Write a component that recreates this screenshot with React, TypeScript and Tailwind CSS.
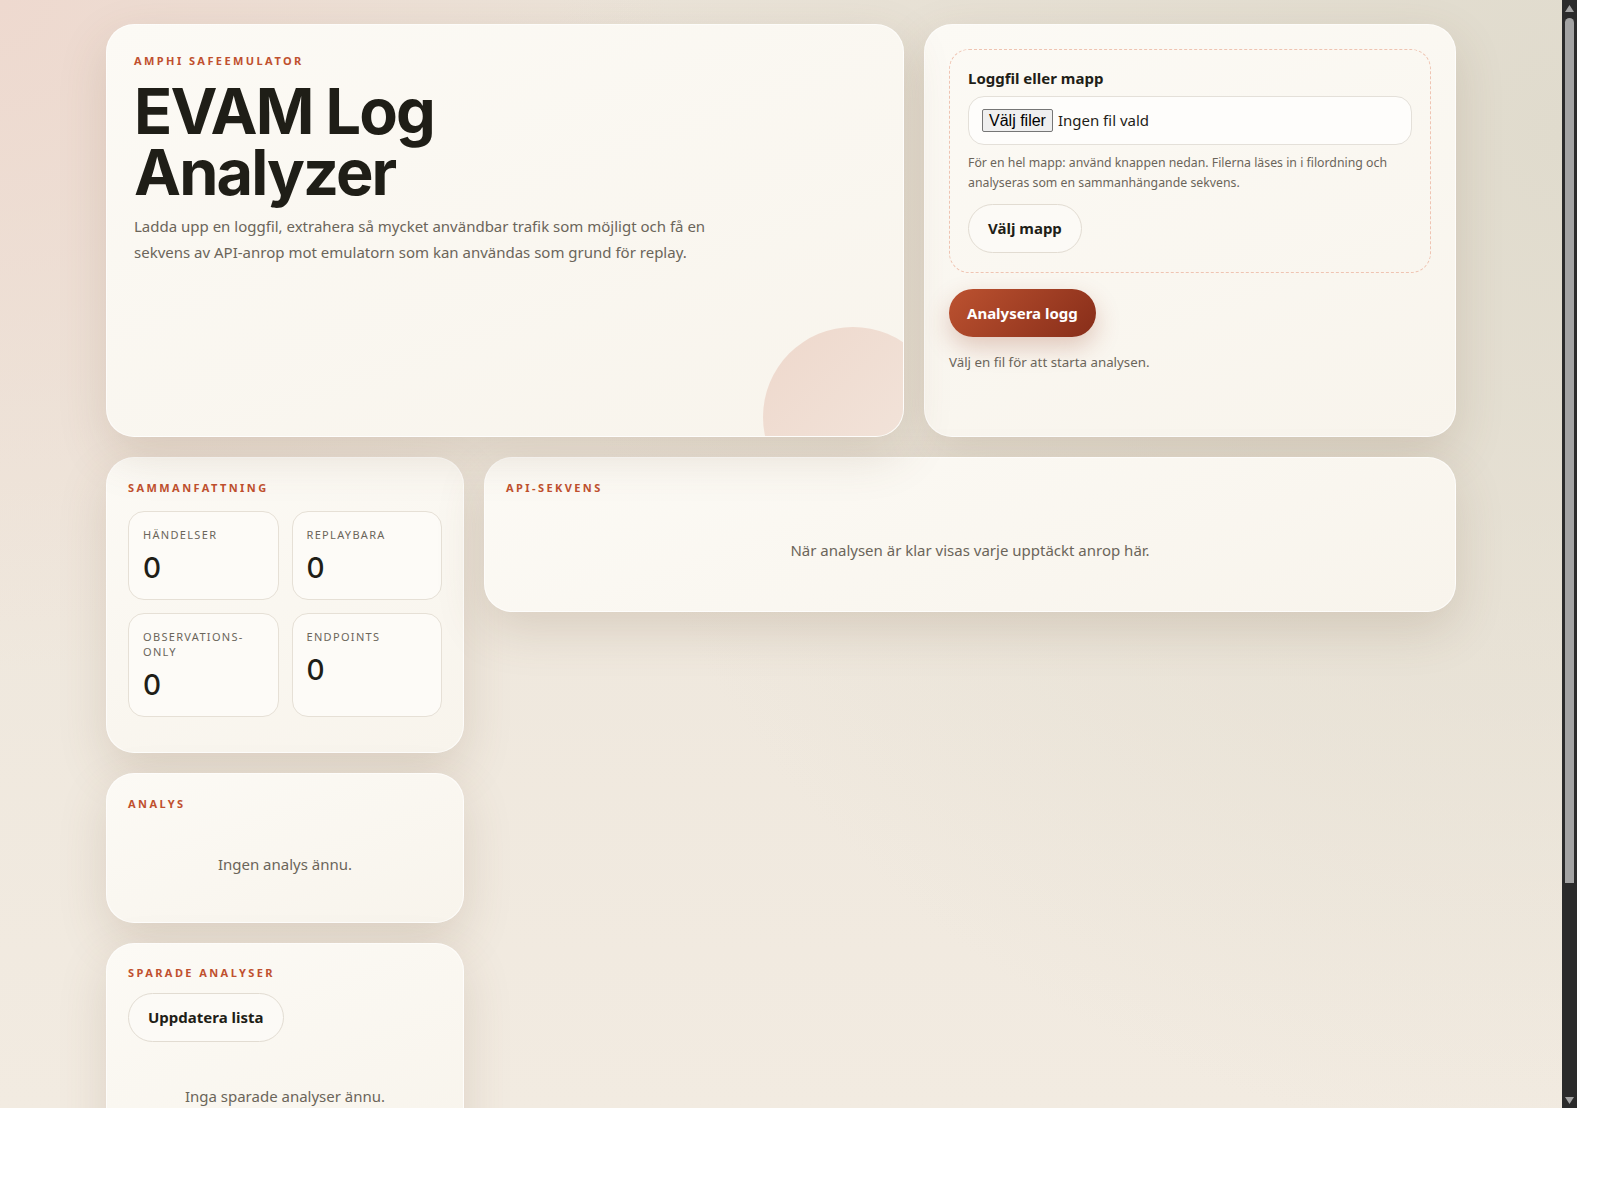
const label = "text-[11px] font-bold uppercase leading-4 tracking-[0.22em] text-[#c0502e]";
const card =
  "rounded-[28px] border border-white/70 bg-[linear-gradient(160deg,#fcfaf5,#f8f4ec)] shadow-[0_18px_48px_rgba(110,85,55,0.17)]";
const pill =
  "rounded-full border border-[#e2dcd2] bg-[#fcfaf6] text-[15px] font-bold text-[#1f1e17]";

function Stat({ name, value }: { name: string; value: number }) {
  return (
    <div className="rounded-2xl border border-[#e6e0d6] bg-[#fdfbf7] px-[14px] pb-[14px] pt-[15px]">
      <p className="text-[11px] uppercase leading-[15px] tracking-[0.12em] text-[#6b655a]">{name}</p>
      <p className="mt-[9px] font-['Inter',sans-serif] text-[28px] font-medium leading-[34px] text-[#1f1e17]">
        {value}
      </p>
    </div>
  );
}

function Empty({ children, className }: { children: React.ReactNode; className: string }) {
  return <p className={`${className} text-center text-[15px] leading-6 text-[#6b655a]`}>{children}</p>;
}

function Scrollbar() {
  return (
    <div className="flex h-full w-[15px] shrink-0 flex-col items-center bg-[#2b2b2b]">
      <svg width="9" height="7" viewBox="0 0 9 7" className="mt-[5px]">
        <path d="M4.5 0L9 7H0z" fill="#a3a3a3" />
      </svg>
      <div className="mt-[6px] h-[865px] w-[9px] rounded-t-full rounded-b-[3px] bg-[#a3a3a3]" />
      <div className="flex-1" />
      <svg width="9" height="7" viewBox="0 0 9 7" className="mb-[4px]">
        <path d="M0 0H9L4.5 7z" fill="#a3a3a3" />
      </svg>
    </div>
  );
}

export default function App() {
  return (
    <div className="flex h-[1108px] w-[1577px] overflow-hidden font-['Noto_Sans',sans-serif]">
      <div className="h-full w-[1562px] overflow-hidden bg-[radial-gradient(circle_at_0%_0%,#eed9cf,transparent_35%),radial-gradient(circle_at_100%_12%,#e0dbcd,transparent_55%),linear-gradient(180deg,#ebe4d9,#f2ebe1)]">
        <main className="mx-auto w-[1350px] pb-10 pt-6">
          {/* top row */}
          <div className="grid grid-cols-[1.5fr_1fr] gap-5">
            <section className={`${card} relative h-[413px] overflow-hidden pl-[27px] pr-7 pt-7`}>
              <p className={label}>Amphi SafeEmulator</p>
              <h1 className="mt-3 font-['Inter',sans-serif] text-[63px] font-bold leading-[61px] tracking-[-0.03em] text-[#1f1e17]">
                EVAM Log
                <br />
                Analyzer
              </h1>
              <p className="mt-[10px] max-w-[600px] text-[15px] leading-[26px] text-[#6b655a]">
                Ladda upp en loggfil, extrahera så mycket användbar trafik som möjligt och få en sekvens av
                API-anrop mot emulatorn som kan användas som grund för replay.
              </p>
              <div className="absolute bottom-[-71px] right-[-40px] h-[180px] w-[180px] rounded-full bg-[linear-gradient(135deg,#eed8cc,#f3e7de)]" />
            </section>

            <section className={`${card} p-6`}>
              <div className="rounded-[20px] border border-dashed border-[#efc4b2] px-[18px] pb-[19px] pt-[18px]">
                <p className="text-[15px] font-bold leading-5 text-[#1f1e17]">Loggfil eller mapp</p>
                <div className="mt-[8px] flex h-[49px] items-center gap-[5px] rounded-2xl border border-[#e4e0d9] bg-[#fefdfb] px-[13px]">
                  <span className="rounded-[2px] border border-[#767676] bg-[#efefef] px-[6px] py-[1px] font-['Liberation_Sans',sans-serif] text-base leading-[19px] text-black">
                    Välj filer
                  </span>
                  <span className="text-[15px] text-[#1f1e17]">Ingen fil vald</span>
                </div>
                <p className="mt-2 text-[12.3px] leading-5 text-[#6b655a]">
                  För en hel mapp: använd knappen nedan. Filerna läses in i filordning och analyseras som en
                  sammanhängande sekvens.
                </p>
                <button className={`${pill} mt-[11px] h-[49px] px-[19px]`}>Välj mapp</button>
              </div>
              <button className="mt-4 h-12 rounded-full bg-[linear-gradient(135deg,#bc5230,#872d19)] px-[18px] text-[15px] font-bold text-white shadow-[0_10px_24px_rgba(150,60,30,0.25)]">
                Analysera logg
              </button>
              <p className="mt-[15px] text-[13.3px] leading-5 text-[#6b655a]">Välj en fil för att starta analysen.</p>
            </section>
          </div>

          {/* bottom row */}
          <div className="mt-5 grid grid-cols-[358px_1fr] items-start gap-5">
            <div className="flex flex-col gap-5">
              <section className={`${card} px-[21px] pb-[35px] pt-[22px]`}>
                <p className={label}>Sammanfattning</p>
                <div className="mt-[15px] grid grid-cols-2 gap-[13px]">
                  <Stat name="Händelser" value={0} />
                  <Stat name="Replaybara" value={0} />
                  <Stat name="Observations-only" value={0} />
                  <Stat name="Endpoints" value={0} />
                </div>
              </section>

              <section className={`${card} px-[21px] pt-[22px]`}>
                <p className={label}>Analys</p>
                <Empty className="pb-[46px] pt-[40px]">Ingen analys ännu.</Empty>
              </section>

              <section className={`${card} px-[21px] pt-[21px]`}>
                <p className={label}>Sparade analyser</p>
                <button className={`${pill} mt-3 h-[49px] px-[19px]`}>Uppdatera lista</button>
                <Empty className="pb-[47px] pt-[42px]">Inga sparade analyser ännu.</Empty>
              </section>
            </div>

            <section className={`${card} px-[21px] pt-[22px]`}>
              <p className={label}>API-sekvens</p>
              <Empty className="pb-[49px] pt-[42px]">När analysen är klar visas varje upptäckt anrop här.</Empty>
            </section>
          </div>
        </main>
      </div>
      <Scrollbar />
    </div>
  );
}
